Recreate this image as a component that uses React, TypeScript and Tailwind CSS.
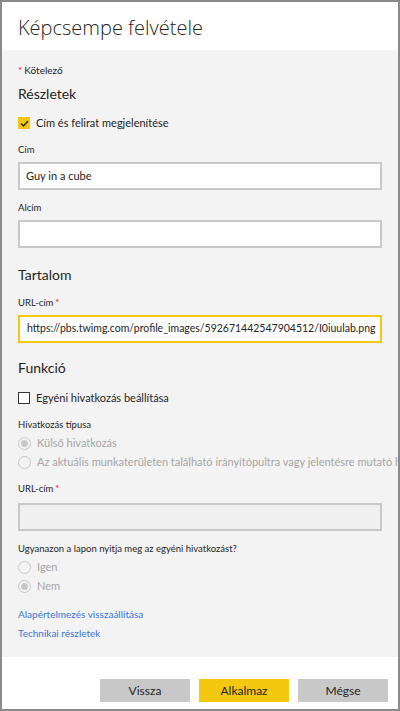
import React from "react";

const Label = ({ children, required, className = "" }: { children: React.ReactNode; required?: boolean; className?: string }) => (
  <div className={`text-[9.5px] leading-[14px] text-[#252423] ${className}`}>
    {children}
    {required && <span className="text-[#e81123] ml-[2px]">*</span>}
  </div>
);

const Radio = ({ checked, label, className = "" }: { checked?: boolean; label: string; className?: string }) => (
  <div className={`flex items-center h-[14px] whitespace-nowrap ${className}`}>
    <span className="w-[13px] h-[13px] rounded-full border border-[#c8c8c8] flex items-center justify-center shrink-0">
      {checked && <span className="w-[7px] h-[7px] rounded-full bg-[#c8c8c8]" />}
    </span>
    <span className="ml-[6px] text-[11px] text-[#a6a6a6]">{label}</span>
  </div>
);

const Checkbox = ({ checked, label, className = "" }: { checked?: boolean; label: string; className?: string }) => (
  <div className={`flex items-center h-[14px] ${className}`}>
    {checked ? (
      <span className="w-[12px] h-[12px] bg-[#f2c811] flex items-center justify-center shrink-0">
        <svg width="9" height="7" viewBox="0 0 9 7">
          <path d="M1 3.5 L3.5 6 L8 1" fill="none" stroke="#252423" strokeWidth="1.3" />
        </svg>
      </span>
    ) : (
      <span className="w-[12px] h-[12px] border border-[#333] bg-white shrink-0" />
    )}
    <span className="ml-[6px] text-[11px] text-[#252423]">{label}</span>
  </div>
);

export default function App() {
  return (
    <div className="w-[400px] h-[711px] border-2 border-[#8a8a8a] flex flex-col overflow-hidden font-['Lato',sans-serif] text-[#252423]">
      <div className="h-[48px] bg-white px-[16px] pt-[12px]">
        <h1 className="text-[20px] leading-[28px] font-light font-['Open_Sans',sans-serif] text-[#252423]">Képcsempe felvétele</h1>
      </div>

      <div className="flex-1 bg-[#f3f3f3] px-[16px] pt-[13px] overflow-hidden">
        <div className="text-[10px] leading-[14px]">
          <span className="text-[#e81123] mr-[2px]">*</span>Kötelező
        </div>
        <div className="mt-[7px] text-[14px] leading-[20px]">Részletek</div>
        <Checkbox checked label="Cím és felirat megjelenítése" className="mt-[12px]" />

        <Label className="mt-[13px]">Cím</Label>
        <div className="mt-[5px] h-[28px] border-2 border-[#c8c8c8] bg-white flex items-center px-[6px] text-[11px]">
          Guy in a cube
        </div>
        <Label className="mt-[11px]">Alcím</Label>
        <div className="mt-[5px] h-[28px] border-2 border-[#c8c8c8] bg-white" />

        <div className="mt-[17px] text-[14px] leading-[20px]">Tartalom</div>
        <Label required className="mt-[11px]">URL-cím</Label>
        <div className="mt-[5px] h-[28px] border-2 border-[#f2c811] bg-white flex items-center px-[7px] text-[10.5px] whitespace-nowrap overflow-hidden">
          h<span className="inline-block w-px h-[14px] bg-[#252423]" />ttps://pbs.twimg.com/profile_images/592671442547904512/I0iuulab.png
        </div>

        <div className="mt-[15px] text-[14px] leading-[20px]">Funkció</div>
        <Checkbox label="Egyéni hivatkozás beállítása" className="mt-[13px]" />

        <Label className="mt-[13px]">Hivatkozás típusa</Label>
        <Radio checked label="Külső hivatkozás" className="mt-[4px]" />
        <Radio label="Az aktuális munkaterületen található irányítópultra vagy jelentésre mutató hivatkozás" className="mt-[5px]" />

        <Label required className="mt-[13px]">URL-cím</Label>
        <div className="mt-[7px] h-[28px] border-2 border-[#c8c8c8] bg-[#f0f0f0]" />

        <Label className="mt-[11px]">Ugyanazon a lapon nyitja meg az egyéni hivatkozást?</Label>
        <Radio label="Igen" className="mt-[4px]" />
        <Radio checked label="Nem" className="mt-[5px]" />

        <div className="mt-[14px] text-[10px] leading-[14px] text-[#3a78d4]">Alapértelmezés visszaállítása</div>
        <div className="mt-[5px] text-[10px] leading-[14px] text-[#3a78d4]">Technikai részletek</div>
      </div>

      <div className="h-[52px] bg-white flex justify-end gap-[9px] pt-[22px] pr-[10px]">
        <button className="w-[90px] h-[23px] bg-[#c8c8c8] text-[12px] text-[#252423]">Vissza</button>
        <button className="w-[90px] h-[23px] bg-[#f2c811] text-[12px] text-[#252423]">Alkalmaz</button>
        <button className="w-[90px] h-[23px] bg-[#c8c8c8] text-[12px] text-[#252423]">Mégse</button>
      </div>
    </div>
  );
}
